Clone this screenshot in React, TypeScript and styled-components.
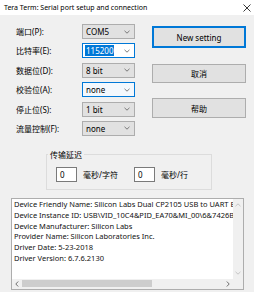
import React from "react";
import styled, { createGlobalStyle } from "styled-components";

const Global = createGlobalStyle`
  html, body { margin: 0; padding: 0; background: #f0f0f0; }
  body {
    font-family: "Noto Sans", "Noto Sans CJK SC", sans-serif;
    color: #000;
  }
  * { box-sizing: border-box; }
`;

const Window = styled.div`
  width: 254px;
  height: 292px;
  overflow: hidden;
  background: #f0f0f0;
  display: flex;
  flex-direction: column;
  font-size: 8px;
`;

const TitleBar = styled.div`
  height: 15px;
  flex: none;
  background: #ffffff;
  display: flex;
  align-items: center;
  justify-content: space-between;
  padding: 0 3px 0 4px;
  font-size: 7px;
  white-space: nowrap;
`;

const Top = styled.div`
  display: flex;
  align-items: flex-start;
  padding: 9px 0 0 16px;
`;

const Form = styled.div`
  display: grid;
  grid-template-columns: 66px 53px;
  grid-auto-rows: 15px;
  row-gap: 4.4px;
  align-items: center;
`;

const Label = styled.span`
  font-size: 8px;
  white-space: nowrap;
`;

type ComboState = "normal" | "focus" | "hover";

const Combo = styled.div<{ $state: ComboState }>`
  height: 15px;
  display: flex;
  align-items: center;
  justify-content: space-between;
  padding: 0 4px 0 2px;
  border: 1px solid
    ${(p) => (p.$state === "normal" ? "#adadad" : "#0078d7")};
  background: ${(p) =>
    p.$state === "focus" ? "#ffffff" : p.$state === "hover" ? "#f3f8fd" : "#e1e1e1"};
  font-size: 8px;
  white-space: nowrap;
`;

const ComboText = styled.span<{ $selected?: boolean }>`
  padding: 0 1px;
  line-height: 11px;
  background: ${(p) => (p.$selected ? "#0078d7" : "transparent")};
  color: ${(p) => (p.$selected ? "#ffffff" : "#000000")};
`;

const Buttons = styled.div`
  display: flex;
  flex-direction: column;
  margin: 2px 0 0 17px;
  width: 94px;
`;

const Button = styled.div<{ $default?: boolean; $h: number; $mt: number }>`
  height: ${(p) => p.$h}px;
  margin-top: ${(p) => p.$mt}px;
  border: 1px solid ${(p) => (p.$default ? "#0078d7" : "#adadad")};
  box-shadow: ${(p) => (p.$default ? "inset 0 0 0 1px #0078d7" : "none")};
  background: #e1e1e1;
  display: flex;
  align-items: center;
  justify-content: center;
  font-size: 8px;
`;

const Group = styled.fieldset`
  margin: 14px 0 0 46px;
  width: 166px;
  padding: 0 0 7px 1px;
  border: 1px solid #dcdcdc;
  border-radius: 0;
  min-inline-size: 0;
`;

const Legend = styled.legend`
  padding: 0 2px;
  font-size: 8px;
  line-height: 10px;
`;

const GroupRow = styled.div`
  display: grid;
  grid-template-columns: 78px auto;
  padding: 7px 0 0 8px;
`;

const DelayCell = styled.div`
  display: flex;
  align-items: center;
`;

const NumInput = styled.div`
  width: 21px;
  height: 15px;
  border: 1px solid #7a7a7a;
  background: #ffffff;
  display: flex;
  align-items: center;
  padding-left: 3px;
  font-size: 8px;
  margin-right: 6px;
`;

const InfoBox = styled.div`
  margin: 8px 0 0 11px;
  width: 233px;
  height: 92px;
  border: 1px solid #adadad;
  background: #ffffff;
  display: grid;
  grid-template-columns: 1fr 10px;
  grid-template-rows: 1fr 10px;
`;

const InfoText = styled.div`
  overflow: hidden;
  padding: 0 0 0 2px;
  font-size: 7.5px;
  line-height: 10.8px;
  white-space: nowrap;
  color: #111;
`;

const VScroll = styled.div`
  background: #f0f0f0;
  display: flex;
  flex-direction: column;
  justify-content: space-between;
  align-items: center;
  padding: 4px 0;
`;

const HScroll = styled.div`
  background: #f0f0f0;
  display: flex;
  align-items: center;
  padding: 0 3px 0 3px;
  gap: 3px;
`;

const Thumb = styled.div`
  width: 130px;
  height: 7px;
  background: #cdcdcd;
`;

const Spacer = styled.div`
  flex: 1;
`;

const Corner = styled.div`
  background: #f0f0f0;
`;

const Chevron = ({ dir, color = "#6d6d6d" }: { dir: "down" | "up" | "left" | "right"; color?: string }) => {
  const paths: Record<string, string> = {
    down: "M0.5 0.8 L3 3.2 L5.5 0.8",
    up: "M0.5 3.2 L3 0.8 L5.5 3.2",
    left: "M3.2 0.5 L0.8 3 L3.2 5.5",
    right: "M0.8 0.5 L3.2 3 L0.8 5.5",
  };
  const horiz = dir === "down" || dir === "up";
  return (
    <svg width={horiz ? 6 : 4} height={horiz ? 4 : 6} viewBox={horiz ? "0 0 6 4" : "0 0 4 6"}>
      <path d={paths[dir]} stroke={color} strokeWidth="0.9" fill="none" />
    </svg>
  );
};

const CloseIcon = () => (
  <svg width="8" height="8" viewBox="0 0 8 8">
    <path d="M0.5 0.5 L7.5 7.5 M7.5 0.5 L0.5 7.5" stroke="#222" strokeWidth="0.9" />
  </svg>
);

const rows: { label: string; value: string; state: ComboState; selected?: boolean }[] = [
  { label: "端口(P):", value: "COM5", state: "normal" },
  { label: "比特率(E):", value: "115200", state: "focus", selected: true },
  { label: "数据位(D):", value: "8 bit", state: "normal" },
  { label: "校验位(A):", value: "none", state: "hover" },
  { label: "停止位(S):", value: "1 bit", state: "normal" },
  { label: "流量控制(F):", value: "none", state: "normal" },
];

const info = [
  "Device Friendly Name: Silicon Labs Dual CP2105 USB to UART Bridge: Enhanced COM Port (COM5)",
  "Device Instance ID: USB\\VID_10C4&PID_EA70&MI_00\\6&7426B4E&0&0000",
  "Device Manufacturer: Silicon Labs",
  "Provider Name: Silicon Laboratories Inc.",
  "Driver Date: 5-23-2018",
  "Driver Version: 6.7.6.2130",
];

export default function App() {
  return (
    <>
      <Global />
      <Window>
        <TitleBar>
          <span>Tera Term: Serial port setup and connection</span>
          <CloseIcon />
        </TitleBar>
        <Top>
          <Form>
            {rows.map((r) => (
              <React.Fragment key={r.label}>
                <Label>{r.label}</Label>
                <Combo $state={r.state}>
                  <ComboText $selected={r.selected}>{r.value}</ComboText>
                  <Chevron dir="down" />
                </Combo>
              </React.Fragment>
            ))}
          </Form>
          <Buttons>
            <Button $default $h={22} $mt={0}>New setting</Button>
            <Button $h={19} $mt={16}>取消</Button>
            <Button $h={20} $mt={15}>帮助</Button>
          </Buttons>
        </Top>
        <Group>
          <Legend>传输延迟</Legend>
          <GroupRow>
            <DelayCell>
              <NumInput>0</NumInput>
              <span>毫秒/字符</span>
            </DelayCell>
            <DelayCell>
              <NumInput>0</NumInput>
              <span>毫秒/行</span>
            </DelayCell>
          </GroupRow>
        </Group>
        <InfoBox>
          <InfoText>
            {info.map((l) => (
              <div key={l}>{l}</div>
            ))}
          </InfoText>
          <VScroll>
            <Chevron dir="up" color="#c0c0c0" />
            <Chevron dir="down" color="#c0c0c0" />
          </VScroll>
          <HScroll>
            <Chevron dir="left" color="#606060" />
            <Thumb />
            <Spacer />
            <Chevron dir="right" color="#606060" />
          </HScroll>
          <Corner />
        </InfoBox>
      </Window>
    </>
  );
}
